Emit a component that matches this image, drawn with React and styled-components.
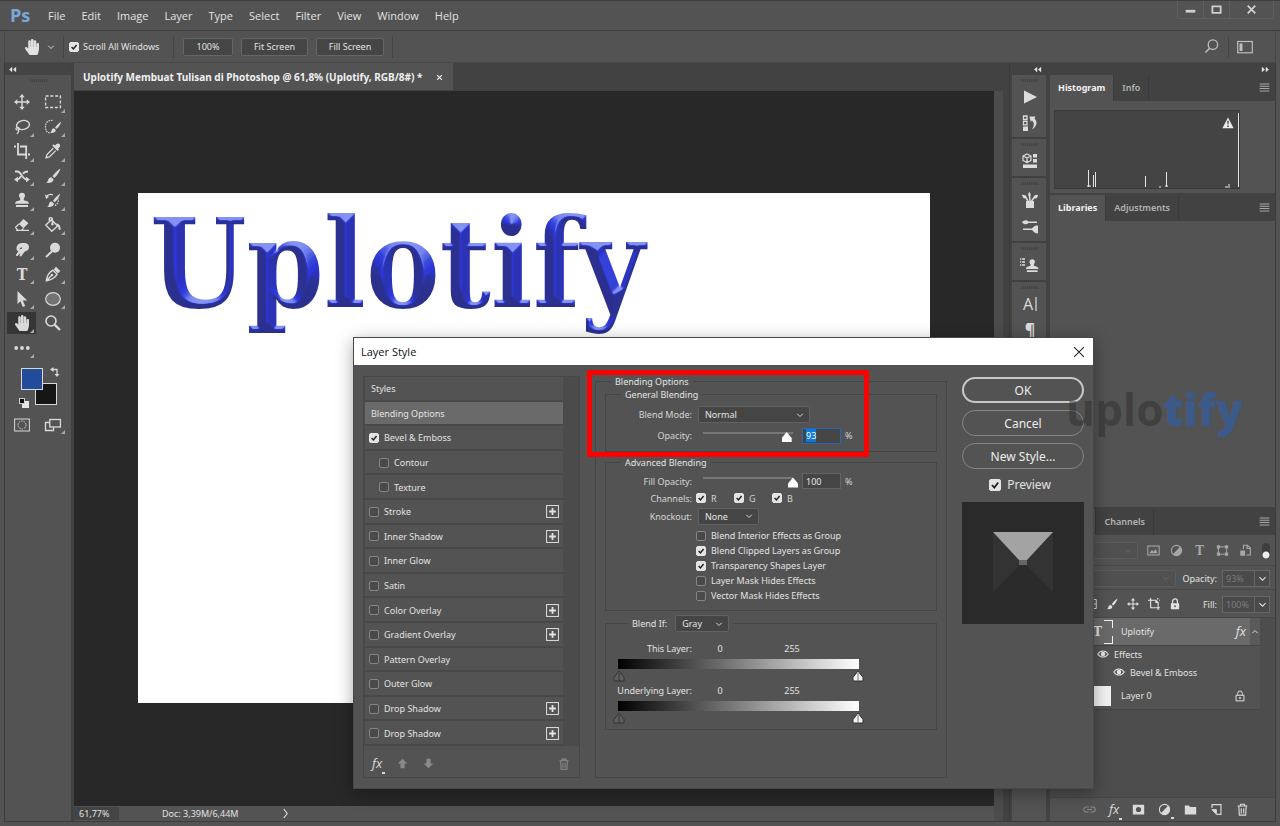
import React, { useEffect, useRef, useState } from 'react';
import styled, { createGlobalStyle, css } from 'styled-components';
import { FaHandPaper } from 'react-icons/fa';

const UI = '"Open Sans", "Noto Sans", sans-serif';
const DIALOG = '"Noto Sans", "Open Sans", sans-serif';

const GlobalStyle = createGlobalStyle`
  * { box-sizing: border-box; }
  body { margin: 0; background: #535353; }
  button, input, select { font: inherit; color: inherit; margin: 0; }
  button { padding: 0; border: 0; background: none; }
`;

const S = { fill: 'none', stroke: 'currentColor' };

const brush = (
  <>
    <path d="M15.500.5c-3 1.800-6 4.800-8 7.700l1.900 1.800c2.600-2.300 4.900-6 6.100-9.500z" />
    <path d="M6.300 9.200 8.500 11.300c.1 2.600-2.800 4.200-7.500 3.500 1.700-.7 1.900-1.800 2.300-3.200.4-1.500 1.600-2.500 3-2.400z" />
  </>
);

const stamp = (
  <path d="M8 .8a3 3 0 0 1 3 3c0 1.300-1.200 2.200-1.300 3.200 0 1.100.6 1.500 1.600 1.700 2 .3 3.500 1 3.700 3H1c.2-2 1.700-2.700 3.700-3 1-.2 1.600-.6 1.600-1.700C6.200 6 5 5.100 5 3.800a3 3 0 0 1 3-3zM2 13h12v2H2z" />
);

const icons = {
  move: (
    <>
      <path {...S} strokeWidth="1.400" d="M8 2v12M2 8h12" />
      <path d="M8 0l2.700 3.300H5.300zM8 16l2.700-3.300H5.300zM0 8l3.300-2.700v5.400zM16 8l-3.300-2.700v5.400z" />
    </>
  ),
  marquee: <rect {...S} x=".6" y="2" width="14.800" height="11.500" strokeWidth="1.300" strokeDasharray="3 1.800" />,
  lasso: (
    <>
      <ellipse {...S} cx="9" cy="6" rx="6.500" ry="4.500" strokeWidth="1.400" transform="rotate(-10 9 6)" />
      <path {...S} strokeWidth="1.200" d="M3 8.500c-1.800.8-1.200 2.600.6 2.500 1.800-.1 2.300-2 .4-2.600M4.500 11c.4 1.500-.2 3-1.700 3.800" />
    </>
  ),
  quick: (
    <>
      <path {...S} strokeWidth="1.200" strokeDasharray="1.500 1" d="M7.500 1.500c-5-.3-7 2-7 6.300 0 4 1.500 6 5 6.200" />
      <g transform="translate(4 2) scale(.8)">{brush}</g>
    </>
  ),
  crop: <path {...S} strokeWidth="1.800" d="M4 0v11.500h9M0 3.500h2M6 3.500h6.200V16M14 11.500h2" />,
  dropper: (
    <>
      <path d="M10 2.500c1.500-1.900 3-2.600 4.400-1.400 1.500 1.300.8 3-1.200 4.500l.8.900-1.400 1.400-5.300-5.200L8.700 1.300z" />
      <path {...S} strokeWidth="1.300" d="M8.300 5.200 2 11.600l-.9 3.300 3.300-1 6.300-6.300" />
    </>
  ),
  shuffle: (
    <>
      <path {...S} strokeWidth="1.800" d="M1 3.500h2.500c3.500 0 5 8 9 8H13M3 11.500c2 0 3.200-2 4-3.400M9 5.800c1-1.500 2-2.300 5-2.300" />
      <path d="M12 8.800l4 2.700-4 2.700zM4 8.800 0 11.500l4 2.700z" />
    </>
  ),
  brush,
  stamp,
  history: (
    <>
      <g transform="translate(1 1) scale(.93)">{brush}</g>
      <path {...S} strokeWidth="1.300" d="M1 5c2-2.500 5-3 7-2" />
      <path d="M0 2.500 1 7l3-2z" />
      <path {...S} strokeWidth="1.200" strokeDasharray="1.500 1" d="M12.500 6c1.800 3 .5 6.500-3 7.500" />
    </>
  ),
  eraser: (
    <>
      <path d="M9.500 2 14.500 6.300 9.500 11.300 4.800 7z" />
      <path {...S} strokeWidth="1.200" d="M4.800 7 1.500 10.500l2.700 2.800h3.300l2-2M2 13.400h13" />
    </>
  ),
  bucket: (
    <>
      <path {...S} strokeWidth="1.400" d="M6.500 2.800 12.600 9 6.800 14.300.8 8zM4.300 5V1.800c0-1.500 3-1.500 3 0V7" />
      <circle cx="7.400" cy="7.300" r="1.200" />
      <path d="M11.300 6.500c3 0 4.400 2.300 4.300 6.300-1.600.5-2.600-.7-2.200-2.300z" />
    </>
  ),
  smudge: (
    <path d="M3 4C4 1.800 6.500.6 9 1c3-.5 6 .7 6 4 0 4-3.500 3.500-5 5.500L7.500 14c-1 1-2.300.3-1.800-1l1-2.300-2.900 3c-1 .9-2.300.2-1.600-1.200L4.500 9C2.500 9.200 2 6.500 3 4zm4.500 1L4.800 7.600l3.500-1z" />
  ),
  dodge: (
    <>
      <circle cx="10" cy="5.800" r="5" />
      <path {...S} strokeWidth="2" d="M7 9.200 1 15" />
    </>
  ),
  type: (
    <text x="8" y="14" textAnchor="middle" fontFamily="DejaVu Serif Condensed, serif" fontWeight="700" fontSize="16">T</text>
  ),
  pen: (
    <>
      <path {...S} strokeWidth="1.400" d="M1.300 14.700C2 10 3.600 6.500 8 4.200L12 8.300c-2.300 4.200-6 5.600-10.700 6.400zM1.500 14.500 6.500 9.500" />
      <circle cx="7" cy="9" r="1.300" />
      <path d="M8.800 3.300 11 .8 15.300 5 12.900 7.400z" />
    </>
  ),
  pointer: <path d="M3.500 0v13l3-2.700L8.800 16l2.400-1L8.800 9.600h4.400z" />,
  ellipse: <ellipse cx="8" cy="8" rx="7.300" ry="6.300" fill="#737373" stroke="currentColor" strokeWidth="1.200" />,
  search: (
    <>
      <circle {...S} cx="6" cy="6" r="5" strokeWidth="1.600" />
      <path {...S} strokeWidth="2.400" d="M9.800 9.800 15 15" />
    </>
  ),
  find: (
    <>
      <circle {...S} cx="9.500" cy="6" r="5" strokeWidth="1.400" />
      <path {...S} strokeWidth="1.600" d="M6 9.800 1.500 14.500" />
    </>
  ),
  dots: (
    <>
      <circle cx="2.200" cy="8" r="1.900" />
      <circle cx="8" cy="8" r="1.900" />
      <circle cx="13.800" cy="8" r="1.900" />
    </>
  ),
  mask: (
    <>
      <rect {...S} x=".6" y="2" width="14.800" height="12" />
      <circle {...S} cx="8" cy="8" r="4" strokeDasharray="1.500 1" />
    </>
  ),
  screens: (
    <>
      <path {...S} strokeWidth="1.300" d="M4.500 5.500h-4v8h8v-3" />
      <rect {...S} x="4.800" y="2.500" width="10.600" height="7.500" strokeWidth="1.300" />
    </>
  ),
  workspace: (
    <>
      <rect {...S} x=".7" y="2.500" width="14.600" height="11.300" strokeWidth="1.200" />
      <path d="M2.500 4.500h3V12h-3z" />
    </>
  ),
  play: <path d="M2 1.500 15 8 2 14.500z" />,
  actions: (
    <>
      <path {...S} strokeWidth="1.300" d="M1.500 1h3.500v3.500H1.500zM1.500 6.300h3.500v3.500H1.500z" />
      <path d="M1 11.500h5v4.500H1zM7.500 1.500h6l-1 2c3 3.200 3 7.500-2.500 11 2.500-4 2.500-7-.2-9L8.800 7z" />
    </>
  ),
  cube: (
    <>
      <path {...S} strokeWidth="1.200" d="M5 1 9 3v4.500L5 9.600 1 7.500V3zM1 3l4 2 4-2M5 5v4.500" />
      <path d="M11 1h4v3.500h-4zM11 6h4v3.500h-4zM1 11.500h14V15H1z" />
    </>
  ),
  brushes: (
    <>
      <path d="M4 9h8v7H4z" />
      <path {...S} strokeWidth="1.500" d="M6 9 3 4M8 9 7.500 3M9.500 9 13 4.500" />
      <path d="M0 3c1.500-.5 3.500 0 4.500 2L3 6.500C1.500 6.300.5 5 0 3zM7.200 0c1.500 1 1.700 3 1 4.300H6.700c-.8-1.500-.6-3 .5-4.300zM15.800 3c.2 2-1 3.800-3 3.500l-1.300-1.400C12.500 3.200 14 2.500 15.800 3z" />
    </>
  ),
  settings: (
    <>
      <path d="M0 4.200C2 2 4.500 1.500 6.500 3.500H15v1.500H6.500C4.500 7 2 6.500 0 4.200zM1 10.500h9c2-2.500 3.500-3 6-3v8c-2.500 0-4-1-6-3.500H1z" />
    </>
  ),
  clone: (
    <>
      <path {...S} strokeWidth="1.300" strokeDasharray="1.200 .8 3 9" d="M-2 2h7M-2 5h7M-2 8h7" />
      <g transform="translate(3 1.500) scale(.9)">{stamp}</g>
    </>
  ),
  character: (
    <>
      <text x="6" y="14" textAnchor="middle" fontFamily="Open Sans, sans-serif" fontSize="16">A</text>
      <path {...S} strokeWidth="1.200" d="M14 1v14" />
    </>
  ),
  paragraph: (
    <text x="8" y="13" textAnchor="middle" fontFamily="Open Sans, sans-serif" fontWeight="700" fontSize="16">¶</text>
  ),
  image: (
    <>
      <rect {...S} x="1" y="2.500" width="14" height="11" strokeWidth="1.300" />
      <path d="M3 11.500 6 7l2 2.500L10.500 6 13 11.500z" />
    </>
  ),
  contrast: (
    <>
      <circle {...S} cx="8" cy="8" r="6.300" strokeWidth="1.300" />
      <path d="M12.500 3.500A6.300 6.300 0 0 1 3.500 12.500z" />
    </>
  ),
  shape: (
    <>
      <rect {...S} x="3" y="3.500" width="10" height="9" strokeWidth="1.200" />
      <path d="M1 1.500h4v4H1zM11 1.500h4v4h-4zM1 10.500h4v4H1zM11 10.500h4v4h-4z" />
    </>
  ),
  smart: (
    <>
      <path {...S} strokeWidth="1.400" d="M5.500 6V1.500h5L14 5v8.500H9M10 1.500V5.500h4" />
      <path d="M1.500 8h6v6.500h-6z" />
    </>
  ),
  artboard: <path {...S} strokeWidth="1.500" d="M3.500 0v13H16M0 3h10.500l3 3V16M10.500 3v3h3M13 0v2M15 3h1" />,
  lock: (
    <>
      <path {...S} strokeWidth="1.700" d="M4.800 7.500V4.500a3.200 3.200 0 0 1 6.400 0v3" />
      <path d="M2.500 7h11v8h-11z" />
      <circle cx="8" cy="11" r="1.200" fill="#535353" />
    </>
  ),
  lockOutline: (
    <>
      <path {...S} strokeWidth="1.300" d="M5 7V4.300a3 3 0 0 1 6 0V7M2.700 7h10.600v7.500H2.700z" />
      <circle cx="8" cy="10.500" r="1.300" />
    </>
  ),
  grid: <path {...S} strokeWidth="1.200" d="M1 2h14v12H1zM1 8h14M8 2v12" />,
  eye: (
    <>
      <path {...S} strokeWidth="1.400" d="M1 8c3.500-5.500 10.500-5.500 14 0-3.500 5.500-10.500 5.500-14 0z" />
      <circle cx="8" cy="8" r="3" />
    </>
  ),
  link: <path {...S} strokeWidth="1.300" d="M7 5H4a3 3 0 0 0 0 6h3M9 5h3a3 3 0 0 1 0 6H9M5 8h6" />,
  addMask: <path fillRule="evenodd" d="M1 2h14v12H1zM8 4.800a3.200 3.200 0 1 0 0 6.400 3.200 3.200 0 0 0 0-6.400z" />,
  folder: <path d="M1 3h5l1.500 2H15v9H1z" />,
  newLayer: (
    <>
      <path {...S} strokeWidth="1.400" d="M2.500 6V2h11v12H8" />
      <path d="M2 8h5.500v6z" />
      <path {...S} d="M2.500 8H8v6z" />
    </>
  ),
  trash: (
    <path {...S} strokeWidth="1.400" d="M2 3.700h12M5.500 3.500v-2h5v2M3.500 4l.6 11h7.800l.6-11M6.500 6.500V13M9.500 6.500V13" />
  ),
  up: <path d="M8 1 15 8h-4v7H5V8H1z" />,
  down: <path d="M8 15 15 8h-4V1H5v7H1z" />,
  warning: (
    <path fillRule="evenodd" d="M8 .5 15.500 15H.500zM7 5l.3 5h1.400L9 5zM7 11.300v1.900h2v-1.900z" />
  ),
  menu: <path {...S} strokeWidth="1.500" d="M1 3h14M1 6.300h14M1 9.600h14M1 13h14" />,
  chevron: <path {...S} strokeWidth="1.800" d="M2.500 5.500 8 11l5.500-5.500" />,
  chevronUp: <path {...S} strokeWidth="1.800" d="M2.500 10.500 8 5l5.500 5.500" />,
  chevronRight: <path {...S} strokeWidth="1.600" d="M5.500 1.500 10.500 8l-5 6.500" />,
  collapse: <path d="M7.500 3v10L2 8zM14.500 3v10L9 8z" />,
  expand: <path d="M1.500 3v10L7 8zM8.500 3v10L14 8z" />,
  close: <path {...S} strokeWidth="1.400" d="M1.500 1.500l13 13M14.500 1.500l-13 13" />,
  closeBold: <path {...S} strokeWidth="2.600" d="M2.500 2.500l11 11M13.500 2.500l-11 11" />,
  minimize: <path d="M1 8.500h14v4H1z" />,
  maximize: <path {...S} strokeWidth="2.600" d="M2 3.500h12v9.500H2z" />,
  plus: (
    <>
      <rect {...S} x=".7" y=".7" width="14.600" height="14.600" strokeWidth="1.200" />
      <path {...S} strokeWidth="2.200" d="M8 3.800v8.400M3.800 8h8.400" />
    </>
  ),
};

function Icon({ name, size = 16 }) {
  return (
    <svg width={size} height={size} viewBox="0 0 16 16" fill="currentColor" aria-hidden="true">
      {icons[name]}
    </svg>
  );
}

const tools = [
  ['move', 'Move'], ['marquee', 'Marquee'],
  ['lasso', 'Lasso'], ['quick', 'Quick Selection'],
  ['crop', 'Crop'], ['dropper', 'Eyedropper'],
  ['shuffle', 'Content-Aware Move'], ['brush', 'Brush'],
  ['stamp', 'Clone Stamp'], ['history', 'History Brush'],
  ['eraser', 'Eraser'], ['bucket', 'Paint Bucket'],
  ['smudge', 'Smudge'], ['dodge', 'Dodge'],
  ['type', 'Type'], ['pen', 'Pen'],
  ['pointer', 'Path Selection'], ['ellipse', 'Ellipse'],
  ['hand', 'Hand'], ['search', 'Zoom'],
  ['dots', 'Edit Toolbar'],
];

const dockGroups = [
  { height: 64, items: ['play', 'actions'] },
  { height: 39, items: ['cube'] },
  { height: 65, items: ['brushes', 'settings'] },
  { height: 39, items: ['clone'] },
  { height: 66, items: ['character', 'paragraph'] },
];

const effects = [
  { name: 'Bevel & Emboss', on: true },
  { name: 'Contour', indent: true },
  { name: 'Texture', indent: true },
  { name: 'Stroke', plus: true },
  { name: 'Inner Shadow', plus: true },
  { name: 'Inner Glow' },
  { name: 'Satin' },
  { name: 'Color Overlay', plus: true },
  { name: 'Gradient Overlay', plus: true },
  { name: 'Pattern Overlay' },
  { name: 'Outer Glow' },
  { name: 'Drop Shadow', plus: true },
  { name: 'Drop Shadow', plus: true },
];

const advancedOptions = [
  ['Blend Interior Effects as Group', false],
  ['Blend Clipped Layers as Group', true],
  ['Transparency Shapes Layer', true],
  ['Layer Mask Hides Effects', false],
  ['Vector Mask Hides Effects', false],
];

function Check({ label, checked, ...rest }) {
  const [on, setOn] = useState(!!checked);
  return (
    <CheckLabel {...rest}>
      <CheckBox type="checkbox" checked={on} onChange={() => setOn(!on)} />
      {label}
    </CheckLabel>
  );
}

function Select({ value, label, ...rest }) {
  return (
    <SelectWrap {...rest}>
      <select aria-label={label} defaultValue={value}>
        <option>{value}</option>
      </select>
      <Icon name="chevron" size={8} />
    </SelectWrap>
  );
}

function Artwork() {
  const steps = [1, 2, 3, 4, 5, 6, 7, 8];
  return (
    <svg width="520" height="145" role="img" aria-label="Uplotify">
      <filter id="bevel" x="0" y="0" width="520" height="145" filterUnits="userSpaceOnUse" colorInterpolationFilters="sRGB">
        <feComponentTransfer in="SourceAlpha" result="h0">
          <feFuncA type="linear" slope="0.11" />
        </feComponentTransfer>
        {steps.map(n => (
          <React.Fragment key={n}>
            <feMorphology in="SourceAlpha" operator="erode" radius={n} result={`e${n}`} />
            <feComposite in={`h${n - 1}`} in2={`e${n}`} operator="arithmetic" k1="0" k2="1" k3="0.11" k4="0" result={`h${n}`} />
          </React.Fragment>
        ))}
        <feGaussianBlur in="h8" stdDeviation="0.8" result="height" />
        <feDiffuseLighting in="height" surfaceScale="9" diffuseConstant="1" lightingColor="#fff" result="light">
          <feDistantLight azimuth="280" elevation="30" />
        </feDiffuseLighting>
        <feComponentTransfer in="light" result="tint">
          <feFuncR type="table" tableValues="0.17 0.17 0.17 0.17 0.17 0.18 0.19 0.23 0.34 0.46 0.53" />
          <feFuncG type="table" tableValues="0.19 0.19 0.20 0.20 0.20 0.21 0.23 0.29 0.40 0.52 0.58" />
          <feFuncB type="table" tableValues="0.56 0.57 0.59 0.64 0.74 0.83 0.85 0.86 0.89 0.93 0.95" />
        </feComponentTransfer>
        <feComposite in="tint" in2="SourceAlpha" operator="in" />
      </filter>
      <ArtText x="12" y="114" filter="url(#bevel)">Uplotify</ArtText>
    </svg>
  );
}

function PanelTabs({ tabs }) {
  return (
    <TabStrip>
      {tabs.map((tab, i) => (
        <Tab key={tab} type="button" $active={i === 0}>{tab}</Tab>
      ))}
      <PanelMenu type="button" aria-label="Panel menu"><Icon name="menu" size={11} /></PanelMenu>
    </TabStrip>
  );
}

function Panels() {
  return (
    <PanelColumn>
      <Panel $height={118}>
        <PanelTabs tabs={['Histogram', 'Info']} />
        <Histogram>
          <svg width="186" height="79" aria-hidden="true">
            <rect x=".5" y=".5" width="185" height="78" fill="#444" stroke="#3a3a3a" />
            <path d="M34.500 60v17M39.500 65v12M41.500 62v15M91.500 66v11M112.500 62v15M184.500 3v74" stroke="#e4e4e4" fill="none" />
            <path d="M33 76h4M105 77h2M111 76h3M171 77h5M174 75h2" stroke="#e4e4e4" fill="none" />
          </svg>
          <Warning><Icon name="warning" size={12} /></Warning>
        </Histogram>
      </Panel>
      <Panel $grow>
        <PanelTabs tabs={['Libraries', 'Adjustments']} />
      </Panel>
      <Panel $height={312}>
        <PanelTabs tabs={['Layers', 'Channels']} />
        <LayerBar $height={31}>
          <Select label="Filter" value="" $width={82} $dim />
          <FilterIcons>
            <Icon name="image" size={13} />
            <Icon name="contrast" size={13} />
            <Icon name="type" size={13} />
            <Icon name="shape" size={13} />
            <Icon name="smart" size={13} />
          </FilterIcons>
          <FilterToggle type="button" aria-label="Toggle filter" />
        </LayerBar>
        <LayerBar $height={24}>
          <Select label="Blend mode" value="" $width={120} $dim />
          <LayerField htmlFor="layer-opacity">Opacity:</LayerField>
          <LayerInput id="layer-opacity" defaultValue="93%" />
          <DropButton type="button" aria-label="Opacity slider"><Icon name="chevron" size={9} /></DropButton>
        </LayerBar>
        <LayerBar $height={28}>
          <LockIcons>
            <Icon name="grid" size={12} />
            <Icon name="brush" size={12} />
            <Icon name="move" size={12} />
            <Icon name="artboard" size={12} />
            <Icon name="lock" size={12} />
          </LockIcons>
          <LayerField htmlFor="layer-fill">Fill:</LayerField>
          <LayerInput id="layer-fill" defaultValue="100%" />
          <DropButton type="button" aria-label="Fill slider"><Icon name="chevron" size={9} /></DropButton>
        </LayerBar>
        <LayerList>
          <LayerRow $active $height={28}>
            <TypeThumb><Icon name="type" size={13} /></TypeThumb>
            <LayerName>Uplotify</LayerName>
            <Fx>fx</Fx>
            <Fold><Icon name="chevronUp" size={8} /></Fold>
          </LayerRow>
          <LayerRow $plain $height={17} $indent={47}>
            <Icon name="eye" size={12} />
            Effects
          </LayerRow>
          <LayerRow $plain $height={19} $indent={63}>
            <Icon name="eye" size={12} />
            Bevel &amp; Emboss
          </LayerRow>
          <LayerRow $height={28}>
            <PixelThumb />
            <LayerName>Layer 0</LayerName>
            <LockMark><Icon name="lockOutline" size={12} /></LockMark>
          </LayerRow>
        </LayerList>
        <PanelFooter>
          <FootButton type="button" aria-label="Link layers" $dim><Icon name="link" size={13} /></FootButton>
          <FootButton type="button" aria-label="Layer style" $flyout><Fx>fx</Fx></FootButton>
          <FootButton type="button" aria-label="Add mask"><Icon name="addMask" size={13} /></FootButton>
          <FootButton type="button" aria-label="Adjustment layer" $flyout><Icon name="contrast" size={13} /></FootButton>
          <FootButton type="button" aria-label="New group"><Icon name="folder" size={13} /></FootButton>
          <FootButton type="button" aria-label="New layer"><Icon name="newLayer" size={13} /></FootButton>
          <FootButton type="button" aria-label="Delete layer"><Icon name="trash" size={13} /></FootButton>
        </PanelFooter>
      </Panel>
    </PanelColumn>
  );
}

function BlendRange({ label }) {
  return (
    <BlendBlock>
      <BlendHead>
        <span>{label}</span>
        <span>0</span>
        <span>255</span>
      </BlendHead>
      <GradientBar />
      <RangePair>
        <StopRange type="range" min="0" max="255" defaultValue="0" aria-label={`${label} black`} $dark />
        <StopRange type="range" min="0" max="255" defaultValue="255" aria-label={`${label} white`} />
      </RangePair>
    </BlendBlock>
  );
}

function LayerStyle() {
  const opacity = useRef(null);

  useEffect(() => {
    opacity.current.focus();
    opacity.current.select();
  }, []);

  return (
    <Dialog role="dialog" aria-label="Layer Style">
      <DialogTitle>
        Layer Style
        <DialogClose type="button" aria-label="Close"><Icon name="close" size={12} /></DialogClose>
      </DialogTitle>
      <DialogBody>
        <StylePanel>
          <StyleScroll>
            <StyleList>
              <StyleRow>Styles</StyleRow>
              <StyleRow $active>Blending Options</StyleRow>
              {effects.map((effect, i) => (
                <StyleRow key={i} $indent={effect.indent} $effect>
                  <Check label={effect.name} checked={effect.on} $gap={5} />
                  {effect.plus && (
                    <button type="button" aria-label={`Add ${effect.name}`}><Icon name="plus" size={13} /></button>
                  )}
                </StyleRow>
              ))}
            </StyleList>
          </StyleScroll>
          <StyleFooter>
            <FootButton type="button" aria-label="Effects" $flyout><Fx>fx</Fx></FootButton>
            <Icon name="up" size={11} />
            <Icon name="down" size={11} />
            <Icon name="trash" size={12} />
          </StyleFooter>
        </StylePanel>

        <Group $outer>
          <Legend $left={15}>Blending Options</Legend>
          <Group>
            <Legend $left={15}>General Blending</Legend>
            <Rows>
              <Field $height={21}>
                <FieldLabel as="span">Blend Mode:</FieldLabel>
                <Select label="Blend Mode" value="Normal" $width={112} />
              </Field>
              <Field $height={21}>
                <FieldLabel htmlFor="opacity">Opacity:</FieldLabel>
                <Slider type="range" aria-label="Opacity" defaultValue="93" />
                <NumberInput id="opacity" ref={opacity} defaultValue="93" $focus />
                <span>%</span>
              </Field>
            </Rows>
          </Group>
          <Group>
            <Legend $left={15}>Advanced Blending</Legend>
            <Rows>
              <Field $height={18}>
                <FieldLabel htmlFor="fill">Fill Opacity:</FieldLabel>
                <Slider type="range" aria-label="Fill Opacity" defaultValue="100" />
                <NumberInput id="fill" defaultValue="100" />
                <span>%</span>
              </Field>
              <Field $height={16}>
                <FieldLabel as="span">Channels:</FieldLabel>
                <Channels>
                  <Check label="R" checked />
                  <Check label="G" checked />
                  <Check label="B" checked />
                </Channels>
              </Field>
              <Field $height={20}>
                <FieldLabel as="span">Knockout:</FieldLabel>
                <Select label="Knockout" value="None" $width={61} />
              </Field>
              <Options>
                {advancedOptions.map(([label, on]) => <Check key={label} label={label} checked={on} />)}
              </Options>
            </Rows>
          </Group>
          <Group>
            <Legend $left={22}>
              Blend If:
              <Select label="Blend If" value="Gray" $width={54} />
            </Legend>
            <BlendRanges>
              <BlendRange label="This Layer:" />
              <BlendRange label="Underlying Layer:" />
            </BlendRanges>
          </Group>
        </Group>

        <Actions>
          <Pill type="button" $primary>OK</Pill>
          <Pill type="button">Cancel</Pill>
          <Pill type="button">New Style...</Pill>
          <PreviewCheck><Check label="Preview" checked $gap={6} $large /></PreviewCheck>
          <Preview>
            <svg viewBox="0 0 122 122" aria-hidden="true">
              <path d="M31 30h60v60H31z" fill="#2b2b2b" />
              <path d="M31 30 61 60 31 90zM91 30 61 60 91 90z" fill="#333" />
              <path d="M31 30h60L65 58h-8z" fill="#a3a3a3" />
              <path d="M57 58h8v5h-8z" fill="#666" />
            </svg>
          </Preview>
        </Actions>
      </DialogBody>
      <Callout />
    </Dialog>
  );
}

export default function App() {
  return (
    <Desktop>
      <GlobalStyle />
      <TitleBar>
        <Logo>Ps</Logo>
        <Menu>
          {['File', 'Edit', 'Image', 'Layer', 'Type', 'Select', 'Filter', 'View', 'Window', 'Help'].map(item => (
            <button type="button" key={item}>{item}</button>
          ))}
        </Menu>
        <WindowButtons>
          <button type="button" aria-label="Minimize"><Icon name="minimize" size={11} /></button>
          <button type="button" aria-label="Maximize"><Icon name="maximize" size={11} /></button>
          <button type="button" aria-label="Close"><Icon name="closeBold" size={11} /></button>
        </WindowButtons>
      </TitleBar>

      <OptionsBar>
        <CurrentTool>
          <FaHandPaper size={16} />
          <Icon name="chevron" size={8} />
        </CurrentTool>
        <ScrollAll><Check label="Scroll All Windows" checked $gap={4} /></ScrollAll>
        <OptionButtons>
          <OptionButton type="button" $width={50}>100%</OptionButton>
          <OptionButton type="button" $width={67}>Fit Screen</OptionButton>
          <OptionButton type="button" $width={68}>Fill Screen</OptionButton>
        </OptionButtons>
        <OptionsEnd>
          <button type="button" aria-label="Search"><Icon name="find" size={15} /></button>
          <button type="button" aria-label="Workspace"><Icon name="workspace" size={16} /></button>
        </OptionsEnd>
      </OptionsBar>

      <Workspace>
        <Toolbar>
          <Strip><Icon name="collapse" size={9} /></Strip>
          <ToolBody>
            <Grip />
            <ToolGrid>
              {tools.map(([name, label]) => (
                <Tool type="button" key={name} aria-label={label} $active={name === 'hand'} $flyout={name !== 'move' && name !== 'search'}>
                  {name === 'hand' ? <FaHandPaper size={16} /> : <Icon name={name} size={16} />}
                </Tool>
              ))}
            </ToolGrid>
            <Swatches type="button" aria-label="Colors">
              <svg width="46" height="44" viewBox="0 0 46 44">
                <rect x="16.500" y="17.500" width="21" height="21" fill="#161616" stroke="#d8d8d8" />
                <rect x="2.500" y="2.500" width="21" height="21" fill="#224b9b" stroke="#d8d8d8" />
                <rect x="3" y="35" width="7" height="7" fill="#e6e6e6" />
                <rect x=".5" y="32.500" width="5" height="5" fill="#111" stroke="#ccc" />
                <path d="M34 3.500h4v5" fill="none" stroke="#d8d8d8" strokeWidth="1.300" />
                <path d="M31 3.500 34.500 1v5zM35.500 8h5L38 11z" fill="#d8d8d8" />
              </svg>
            </Swatches>
            <ModeButtons>
              <Tool type="button" aria-label="Quick mask"><Icon name="mask" size={16} /></Tool>
              <Tool type="button" aria-label="Screen mode" $flyout><Icon name="screens" size={16} /></Tool>
            </ModeButtons>
          </ToolBody>
        </Toolbar>

        <Document>
          <DocTabs>
            <DocTab>
              Uplotify Membuat Tulisan di Photoshop @ 61,8% (Uplotify, RGB/8#) *
              <button type="button" aria-label="Close document"><Icon name="closeBold" size={7} /></button>
            </DocTab>
          </DocTabs>
          <Viewport>
            <Paper><Artwork /></Paper>
          </Viewport>
          <StatusBar>
            <ZoomValue>61,77%</ZoomValue>
            <DocInfo>Doc: 3,39M/6,44M</DocInfo>
            <Icon name="chevronRight" size={11} />
          </StatusBar>
        </Document>

        <Side>
          <SideStrip>
            <Icon name="collapse" size={9} />
            <Icon name="expand" size={9} />
          </SideStrip>
          <SideBody>
            <Dock>
              {dockGroups.map(group => (
                <DockGroup key={group.items[0]} $height={group.height}>
                  <Grip />
                  {group.items.map(name => (
                    <button type="button" key={name} aria-label={name}><Icon name={name} size={16} /></button>
                  ))}
                </DockGroup>
              ))}
            </Dock>
            <Panels />
          </SideBody>
        </Side>
      </Workspace>

      <LayerStyle />
      <Watermark>uplo<b>tify</b></Watermark>
    </Desktop>
  );
}

const Desktop = styled.div`
  position: relative;
  min-height: 100vh;
  display: flex;
  flex-direction: column;
  overflow: hidden;
  background: #535353;
  color: #e2e2e2;
  font-family: ${DIALOG};
  font-size: 9px;
  line-height: 13px;
  svg { display: block; flex: none; overflow: visible; }
`;

const TitleBar = styled.header`
  display: flex;
  align-items: center;
  height: 31px;
  padding: 0 6px 0 10px;
  border-top: 1px solid #3f3f3f;
  border-bottom: 1px solid #3e3e3e;
`;

const Logo = styled.div`
  width: 30px;
  padding-bottom: 2px;
  color: #7ba7d8;
  font-family: ${UI};
  font-size: 18px;
  font-weight: 700;
  line-height: 24px;
`;

const Menu = styled.nav`
  display: flex;
  font-family: ${UI};
  font-size: 11px;
  line-height: 16px;
  button { padding: 0 8px; }
`;

const WindowButtons = styled.div`
  display: flex;
  align-self: flex-start;
  margin-left: auto;
  height: 18px;
  border: 1px solid #5f5f5f;
  border-top: 0;
  color: #d0d0d0;
  button {
    display: flex;
    align-items: center;
    justify-content: center;
    width: 26px;
    border-right: 1px solid #5f5f5f;
  }
  button:last-child { width: 43px; border-right: 0; }
`;

const OptionsBar = styled.div`
  display: flex;
  align-items: center;
  height: 32px;
  margin: 0 4px;
  border: 1px solid #484848;
  border-width: 0 1px 1px;
`;

const CurrentTool = styled.div`
  display: flex;
  align-items: center;
  gap: 7px;
  width: 59px;
  height: 22px;
  padding-left: 19px;
  border-right: 1px solid #444;
`;

const ScrollAll = styled.div`
  display: flex;
  align-items: center;
  width: 110px;
  height: 22px;
  padding-left: 5px;
  border-right: 1px solid #444;
`;

const OptionButtons = styled.div`
  display: flex;
  align-items: center;
  gap: 8px;
  height: 22px;
  padding: 0 8px 0 9px;
  border-right: 1px solid #444;
`;

const OptionButton = styled.button`
  width: ${p => p.$width}px;
  height: 18px;
  border: 1px solid #666;
  border-radius: 2px;
  background: #454545;
`;

const OptionsEnd = styled.div`
  display: flex;
  align-items: center;
  margin-left: auto;
  padding-right: 22px;
  color: #bdbdbd;
  button { height: 22px; padding: 0 0 0 8px; }
  button:first-child { padding: 0 9px 0 0; border-right: 1px solid #444; }
`;

const Workspace = styled.main`
  flex: 1;
  display: flex;
  margin: 0 4px 4px;
  border: 1px solid #3c3c3c;
  border-top: 0;
  background: #424242;
`;

const Toolbar = styled.aside`
  display: flex;
  flex-direction: column;
  width: 66px;
  margin-right: 3px;
`;

const Strip = styled.div`
  display: flex;
  align-items: center;
  height: 12px;
  padding-left: 3px;
  background: #444;
`;

const ToolBody = styled.div`
  flex: 1;
  padding-left: 1px;
  background: #535353;
`;

const Grip = styled.div`
  width: 18px;
  height: 3px;
  margin: 4px auto 8px;
  background: repeating-linear-gradient(90deg, #444 0 1px, #4f4f4f 1px 2px);
`;

const ToolGrid = styled.div`
  display: grid;
  grid-template-columns: 31px 31px;
  grid-auto-rows: 1fr;
  height: 270px;
`;

const Tool = styled.button`
  position: relative;
  display: flex;
  align-items: center;
  justify-content: center;
  margin: 1px;
  background: ${p => (p.$active ? '#363636' : 'none')};
  color: #dadada;
  ${p => p.$flyout && css`
    &::after {
      content: '';
      position: absolute;
      right: 2px;
      bottom: 1px;
      border: 2px solid;
      border-color: transparent #aaa #aaa transparent;
    }
  `}
`;

const Swatches = styled.button`
  display: block;
  margin: 6px 0 0 13px;
`;

const ModeButtons = styled.div`
  display: grid;
  grid-template-columns: 31px 31px;
  margin-top: 4px;
  button { height: 20px; }
`;

const Document = styled.section`
  flex: 1;
  min-width: 0;
  display: flex;
  flex-direction: column;
  background: #4c4c4c;
`;

const DocTabs = styled.div`
  display: flex;
  height: 28px;
  background: #424242;
`;

const DocTab = styled.div`
  display: flex;
  align-items: center;
  gap: 14px;
  height: 27px;
  padding: 1px 10px 0 9px;
  background: #535353;
  color: #f0f0f0;
  font-size: 10px;
  font-weight: 700;
`;

const Viewport = styled.div`
  flex: 1;
  display: flex;
  margin-right: 9px;
  padding: 102px 64px 103px;
  background: #282828;
`;

const Paper = styled.div`
  flex: 1;
  background: #fff;
`;

const ArtText = styled.text`
  font-family: 'DejaVu Serif Condensed', 'DejaVu Serif', serif;
  font-size: 123px;
  font-weight: 700;
`;

const StatusBar = styled.footer`
  display: flex;
  align-items: center;
  height: 15px;
  margin-right: 9px;
  background: #535353;
`;

const ZoomValue = styled.div`
  width: 45px;
  padding-left: 5px;
  background: #444;
`;

const DocInfo = styled.div`
  width: 161px;
  padding-left: 43px;
`;

const Side = styled.aside`
  display: flex;
  flex-direction: column;
  margin-left: 6px;
  padding-left: 2px;
  border-left: 1px solid #3a3a3a;
`;

const SideStrip = styled.div`
  display: flex;
  align-items: center;
  justify-content: space-between;
  height: 12px;
  padding: 0 5px 0 21px;
`;

const SideBody = styled.div`
  flex: 1;
  display: flex;
  gap: 4px;
`;

const Dock = styled.div`
  width: 34px;
  background: #535353;
`;

const DockGroup = styled.div`
  display: flex;
  flex-direction: column;
  align-items: center;
  height: ${p => p.$height}px;
  padding-left: 2px;
  border-bottom: 2px solid #404040;
  color: #dcdcdc;
  ${Grip} { margin: 4px auto 7px; }
  button + button { margin-top: 10px; }
`;

const PanelColumn = styled.div`
  display: flex;
  flex-direction: column;
  gap: 2px;
  width: 225px;
`;

const Panel = styled.section`
  display: flex;
  flex-direction: column;
  flex: ${p => (p.$grow ? '1' : 'none')};
  height: ${p => (p.$grow ? 'auto' : `${p.$height}px`)};
  background: #535353;
`;

const TabStrip = styled.div`
  display: flex;
  flex: none;
  height: 26px;
  background: #424242;
`;

const Tab = styled.button`
  padding: 0 8px 2px;
  border-right: 1px solid #3a3a3a;
  background: ${p => (p.$active ? '#535353' : 'none')};
  color: ${p => (p.$active ? '#f2f2f2' : '#b4b4b4')};
  font-weight: ${p => (p.$active ? 700 : 600)};
`;

const PanelMenu = styled.button`
  margin-left: auto;
  padding: 0 5px 2px 0;
  color: #a8a8a8;
`;

const Histogram = styled.div`
  position: relative;
  padding: 9px 4px 0;
`;

const Warning = styled.div`
  position: absolute;
  left: 172px;
  top: 16px;
  color: #ececec;
`;

const LayerBar = styled.div`
  display: flex;
  flex: none;
  align-items: center;
  height: ${p => p.$height}px;
  padding: 1px 5px 0 6px;
  border-bottom: 1px solid #474747;
`;

const FilterIcons = styled.div`
  display: flex;
  gap: 10px;
  margin-left: 9px;
  color: #a6a6a6;
`;

const FilterToggle = styled.button`
  width: 8px;
  height: 16px;
  margin-left: auto;
  border-radius: 4px;
  background: radial-gradient(circle at 4px 12px, #ececec 3px, #3e3e3e 4px);
`;

const LayerField = styled.label`
  margin-left: auto;
  padding-right: 5px;
`;

const LayerInput = styled.input`
  width: 33px;
  height: 17px;
  padding: 0 3px;
  border: 1px solid #666;
  background: #4a4a4a;
  color: #7c7c7c;
`;

const DropButton = styled.button`
  display: flex;
  align-items: center;
  justify-content: center;
  width: 15px;
  height: 17px;
  border: 1px solid #666;
  border-left: 0;
  background: #4a4a4a;
`;

const LockIcons = styled.div`
  display: flex;
  gap: 9px;
  padding-left: 29px;
`;

const LayerList = styled.div`
  flex: 1;
  padding-right: 15px;
  background: #4d4d4d;
`;

const LayerRow = styled.div`
  display: flex;
  align-items: center;
  gap: ${p => (p.$indent ? 5 : 8)}px;
  height: ${p => p.$height}px;
  padding-left: ${p => p.$indent || 0}px;
  border-bottom: 1px solid ${p => (p.$plain ? 'transparent' : '#454545')};
  background: ${p => (p.$active ? '#6a6a6a' : '#535353')};
`;

const LayerName = styled.div`
  flex: 1;
`;

const TypeThumb = styled.div`
  display: flex;
  align-items: center;
  width: 28px;
  height: 24px;
  margin-left: 35px;
  padding-left: 6px;
  background:
    linear-gradient(#eee, #eee) 100% 0 / 9px 1px no-repeat,
    linear-gradient(#eee, #eee) 100% 0 / 1px 8px no-repeat,
    linear-gradient(#eee, #eee) 100% 100% / 9px 1px no-repeat,
    linear-gradient(#eee, #eee) 100% 100% / 1px 8px no-repeat;
`;

const PixelThumb = styled.div`
  width: 28px;
  height: 20px;
  margin: 0 2px 0 33px;
  background: #f2f2f2;
`;

const Fx = styled.span`
  font-family: ${UI};
  font-size: 13px;
  font-style: italic;
  line-height: 13px;
`;

const Fold = styled.div`
  display: flex;
  align-items: center;
  height: 100%;
  margin-left: -4px;
  padding: 0 1px;
  background: #5a5a5a;
`;

const LockMark = styled.div`
  padding-right: 14px;
`;

const PanelFooter = styled.div`
  display: flex;
  align-items: center;
  justify-content: space-between;
  height: 24px;
  padding: 0 26px 0 33px;
  border-top: 1px solid #444;
`;

const FootButton = styled.button`
  position: relative;
  color: ${p => (p.$dim ? '#8a8a8a' : '#dadada')};
  ${p => p.$flyout && css`
    &::after {
      content: '';
      position: absolute;
      right: -3px;
      bottom: -3px;
      width: 3px;
      height: 2px;
      background: #dadada;
    }
  `}
`;

const CheckLabel = styled.label`
  display: flex;
  align-items: center;
  gap: ${p => p.$gap || 5}px;
  ${p => p.$large && css`
    font-size: 12px;
    input { width: 12px; height: 12px; }
  `}
`;

const CheckBox = styled.input`
  appearance: none;
  width: 10px;
  height: 10px;
  border: 1px solid #858585;
  border-radius: 2px;
  background: #4a4a4a;
  &:checked {
    border-color: #e4e4e4;
    background: #e4e4e4 url("data:image/svg+xml,%3Csvg xmlns='http://www.w3.org/2000/svg' viewBox='0 0 10 10'%3E%3Cpath d='M2 5l2.300 2.500L8.200 2.500' fill='none' stroke='%23222' stroke-width='1.800'/%3E%3C/svg%3E") center / 100%;
  }
`;

const SelectWrap = styled.div`
  display: flex;
  align-items: center;
  width: ${p => p.$width}px;
  height: 17px;
  padding-right: 5px;
  border: 1px solid ${p => (p.$dim ? '#5c5c5c' : '#626262')};
  border-radius: 2px;
  background: ${p => (p.$dim ? '#505050' : '#454545')};
  color: ${p => (p.$dim ? '#6c6c6c' : '#e6e6e6')};
  select {
    flex: 1;
    min-width: 0;
    appearance: none;
    border: 0;
    padding: 0 0 0 6px;
    background: none;
    outline: 0;
  }
`;

const Dialog = styled.section`
  position: absolute;
  left: 353px;
  top: 337px;
  width: 741px;
  border: 1px solid #484848;
  background: #535353;
  box-shadow: 0 4px 16px rgba(0, 0, 0, 0.35);
`;

const DialogTitle = styled.div`
  display: flex;
  align-items: center;
  justify-content: space-between;
  height: 27px;
  padding: 0 8px 0 7px;
  background: #fff;
  color: #111;
  font-family: ${UI};
  font-size: 11px;
`;

const DialogClose = styled.button`
  color: #222;
`;

const DialogBody = styled.div`
  display: grid;
  grid-template-columns: 217px 1fr 122px;
  gap: 15px;
  padding: 10px 9px;
`;

const StylePanel = styled.div`
  display: flex;
  flex-direction: column;
  margin-top: 1px;
  border: 1px solid #474747;
`;

const StyleScroll = styled.div`
  padding-right: 16px;
  background: #4b4b4b;
`;

const StyleList = styled.div`
  display: grid;
  grid-auto-rows: 1fr;
  height: 369px;
  padding-left: 1px;
`;

const StyleRow = styled.div`
  display: flex;
  align-items: center;
  justify-content: space-between;
  padding: 1px 4px 0 ${p => (p.$indent ? 14 : p.$effect ? 4 : 6)}px;
  border-bottom: 2px solid #484848;
  background: ${p => (p.$active ? '#6a6a6a' : '#535353')};
`;

const StyleFooter = styled.div`
  display: flex;
  align-items: center;
  gap: 15px;
  height: 31px;
  padding: 4px 9px 0 8px;
  color: #8a8a8a;
  svg:last-child { margin-left: auto; }
`;

const Group = styled.fieldset`
  min-width: 0;
  margin: 0 ${p => (p.$outer ? 0 : 9)}px ${p => (p.$outer ? 0 : 4)}px ${p => (p.$outer ? 0 : 9)}px;
  padding: 0;
  border: 1px solid #454545;
`;

const Legend = styled.legend`
  display: flex;
  align-items: center;
  gap: 8px;
  margin-left: ${p => p.$left}px;
  padding: 0 4px;
`;

const Rows = styled.div`
  padding: 3px 0 5px;
`;

const Field = styled.div`
  display: flex;
  align-items: center;
  gap: 4px;
  height: ${p => p.$height}px;
  color: #d4d4d4;
`;

const FieldLabel = styled.label`
  width: 86px;
  margin-right: 2px;
  text-align: right;
`;

const Slider = styled.input`
  appearance: none;
  width: 100px;
  height: 14px;
  background: linear-gradient(#777, #777) 5px 3px / 90px 2px no-repeat;
  &::-webkit-slider-thumb {
    appearance: none;
    width: 10px;
    height: 10px;
    margin-top: 3px;
    background: #fff;
    clip-path: polygon(50% 0, 100% 60%, 100% 100%, 0 100%, 0 60%);
  }
`;

const NumberInput = styled.input`
  width: 39px;
  height: 16px;
  padding: 0 3px;
  border: 1px solid ${p => (p.$focus ? '#2468b8' : '#646464')};
  background: #454545;
  color: #e8e8e8;
  outline: 0;
  &::selection { background: #0f78d8; color: #fff; }
`;

const Channels = styled.div`
  display: grid;
  grid-template-columns: 38px 38px 38px;
  margin-left: -2px;
`;

const Options = styled.div`
  display: grid;
  grid-auto-rows: 15px;
  justify-items: start;
  margin: 2px 0 2px 90px;
`;

const BlendRanges = styled.div`
  padding: 10px 0 5px 7px;
`;

const BlendBlock = styled.div`
  & + & { margin-top: 2px; }
`;

const BlendHead = styled.div`
  display: grid;
  grid-template-columns: 79px 56px 88px;
  justify-items: center;
  span:first-child { justify-self: end; }
`;

const GradientBar = styled.div`
  width: 241px;
  height: 10px;
  margin: 4px 0 0 5px;
  background: linear-gradient(90deg, #000, #fff);
`;

const RangePair = styled.div`
  display: grid;
  width: 251px;
`;

const StopRange = styled.input`
  grid-area: 1 / 1;
  appearance: none;
  width: 100%;
  height: 13px;
  background: none;
  pointer-events: none;
  &::-webkit-slider-thumb {
    appearance: none;
    width: 12px;
    height: 12px;
    pointer-events: auto;
    background: url("data:image/svg+xml,%3Csvg xmlns='http://www.w3.org/2000/svg' viewBox='0 0 12 12'%3E%3Cpath d='M6 1 11 7.500v3.500H1V7.500z' fill='${p => (p.$dark ? '%23606060' : '%23f4f4f4')}' stroke='%23333'/%3E%3Cpath d='M6 3v8' stroke='${p => (p.$dark ? '%23333' : '%23777')}'/%3E%3C/svg%3E");
  }
`;

const Actions = styled.div`
  display: flex;
  flex-direction: column;
  gap: 7px;
  padding-top: 2px;
`;

const Pill = styled.button`
  height: 26px;
  border: ${p => (p.$primary ? '2px solid #c8c8c8' : '1px solid #858585')};
  border-radius: 13px;
  color: #ececec;
  font-size: 12px;
`;

const PreviewCheck = styled.div`
  display: flex;
  justify-content: center;
  padding: 2px 6px 4px 0;
`;

const Preview = styled.div`
  background: #2a2a2a;
`;

const Callout = styled.div`
  position: absolute;
  left: 233px;
  top: 32px;
  width: 282px;
  height: 87px;
  border: 5px solid #f00;
  pointer-events: none;
`;

const Watermark = styled.div`
  position: absolute;
  left: 1066px;
  top: 377px;
  color: rgba(40, 40, 40, 0.45);
  font-family: ${UI};
  font-size: 44px;
  font-weight: 700;
  line-height: 64px;
  pointer-events: none;
  b { color: rgba(45, 95, 175, 0.6); }
`;
